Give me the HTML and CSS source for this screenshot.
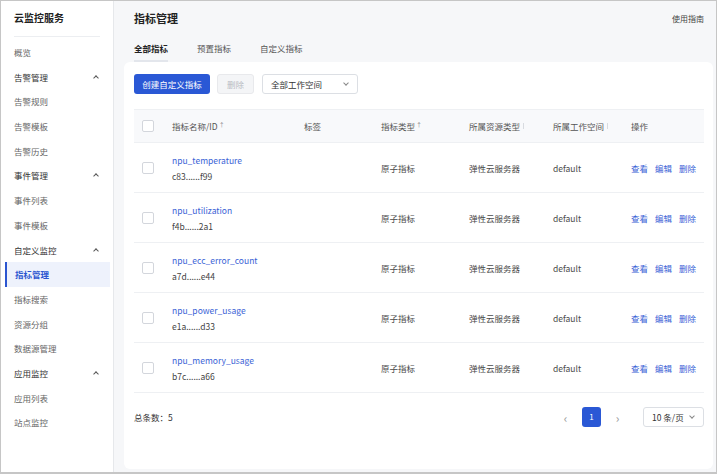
FILE: index.html
```html
<!DOCTYPE html>
<html lang="zh-CN">
<head>
  <meta charset="UTF-8" />
  <title>指标管理 - 云监控服务</title>
  <link rel="stylesheet" href="styles.css">
</head>
<body>
  <div class="frame">
    <nav class="sidebar">
      <h2>云监控服务</h2>
      <a class="nav-item">概览</a>
      <a class="nav-item group">告警管理<span class="caret"></span></a>
      <a class="nav-item">告警规则</a>
      <a class="nav-item">告警模板</a>
      <a class="nav-item">告警历史</a>
      <a class="nav-item group">事件管理<span class="caret"></span></a>
      <a class="nav-item">事件列表</a>
      <a class="nav-item">事件模板</a>
      <a class="nav-item group">自定义监控<span class="caret"></span></a>
      <a class="nav-item active">指标管理</a>
      <a class="nav-item">指标搜索</a>
      <a class="nav-item">资源分组</a>
      <a class="nav-item">数据源管理</a>
      <a class="nav-item group">应用监控<span class="caret"></span></a>
      <a class="nav-item">应用列表</a>
      <a class="nav-item">站点监控</a>
    </nav>

    <div class="main">
      <div class="page-head">
        <h1>指标管理</h1>
        <a class="guide">使用指南</a>
      </div>
      <div class="tabs">
        <span class="tab active">全部指标</span>
        <span class="tab">预置指标</span>
        <span class="tab">自定义指标</span>
      </div>

      <div class="card">
        <div class="toolbar">
          <button class="btn primary">创建自定义指标</button>
          <button class="btn disabled">删除</button>
          <div class="select ws">全部工作空间<span class="chev"></span></div>
        </div>

        <div class="table">
          <div class="row head">
            <span><i class="check"></i></span>
            <span>指标名称/ID<em class="sort">↑</em></span>
            <span>标签</span>
            <span>指标类型<em class="sort">↑</em></span>
            <span>所属资源类型<em class="bar"></em></span>
            <span>所属工作空间<em class="bar"></em></span>
            <span>操作</span>
          </div>
          <div id="rows"></div>
        </div>

        <div class="footer">
          <span class="total">总条数：5</span>
          <div class="pager">
            <span class="arrow">‹</span>
            <span class="page current">1</span>
            <span class="arrow">›</span>
            <div class="select size">10 条/页<span class="chev"></span></div>
          </div>
        </div>
      </div>
    </div>
  </div>

  <script>
    const metrics = [
      ["npu_temperature", "c83......f99"],
      ["npu_utilization", "f4b......2a1"],
      ["npu_ecc_error_count", "a7d......e44"],
      ["npu_power_usage", "e1a......d33"],
      ["npu_memory_usage", "b7c......a66"]
    ];

    const rows = document.getElementById("rows");
    metrics.forEach(([name, id]) => {
      const row = document.createElement("div");
      row.className = "row";
      row.innerHTML = `
        <span><i class="check"></i></span>
        <span class="name"><a>${name}</a><small>${id}</small></span>
        <span></span>
        <span>原子指标</span>
        <span>弹性云服务器</span>
        <span>default</span>
        <span class="ops"><a>查看</a><a>编辑</a><a>删除</a></span>`;
      rows.appendChild(row);
    });
  </script>
</body>
</html>
```

FILE: styles.css
```css
body {
  margin: 0;
  font-family: "Noto Sans CJK SC", "Noto Sans", sans-serif;
  color: #333;
  background: #fff;
}

.frame {
  width: 717px;
  height: 474px;
  box-sizing: border-box;
  border: 1px solid #c6c6c6;
  border-bottom-width: 2px;
  display: flex;
  overflow: hidden;
}

.sidebar {
  width: 113px;
  flex-shrink: 0;
  background: #fff;
  border-right: 1px solid #e6e8eb;
  padding: 0 3px 0 4px;
  box-sizing: border-box;
  display: flex;
  flex-direction: column;
}

.sidebar h2 {
  font-size: 10px;
  font-weight: 600;
  color: #222;
  margin: 0 10px 0 9px;
  height: 35px;
  line-height: 33px;
  border-bottom: 1px solid #eceef1;
  margin-bottom: 3px;
}

.nav-item {
  height: 24.7px;
  line-height: 24.7px;
  font-size: 8.5px;
  color: #666;
  padding-left: 9px;
  display: flex;
  align-items: center;
  position: relative;
}

.nav-item.group {
  color: #333;
}

.caret {
  position: absolute;
  left: 89px;
  top: 11px;
  width: 3px;
  height: 3px;
  border-left: 1px solid #555;
  border-top: 1px solid #555;
  transform: rotate(45deg);
}

.nav-item.active {
  background: #eef2fc;
  color: #2b55d0;
  font-weight: 600;
  border-left: 2px solid #2b55d0;
  padding-left: 8px;
}

.main {
  flex: 1;
  background: #f6f7f9;
  padding: 0 3px 3px 10px;
  display: flex;
  flex-direction: column;
}

.page-head {
  display: flex;
  justify-content: space-between;
  align-items: center;
  height: 34px;
  padding: 0 9px 0 10px;
}

.page-head h1 {
  font-size: 11px;
  font-weight: 600;
  color: #222;
  margin: 0;
}

.guide {
  font-size: 8px;
  color: #444;
}

.tabs {
  display: flex;
  gap: 29px;
  padding-left: 10px;
  height: 27px;
}

.tab {
  font-size: 8.5px;
  color: #555;
  line-height: 27px;
}

.tab.active {
  color: #222;
  font-weight: 600;
  border-bottom: 2px solid #e3e6ec;
}

.card {
  flex: 1;
  background: #fff;
  border-radius: 6px;
  padding: 12px 9px 0 10px;
  display: flex;
  flex-direction: column;
}

.toolbar {
  display: flex;
  gap: 7px;
  height: 20px;
}

.btn {
  font-family: inherit;
  font-size: 8.5px;
  border-radius: 3px;
  border: 1px solid transparent;
  padding: 0;
  height: 20px;
}

.btn.primary {
  width: 76px;
  background: #2a58d5;
  color: #fff;
}

.btn.disabled {
  width: 37px;
  background: #f4f5f7;
  border-color: #e8e9ec;
  color: #b9bcc2;
}

.select {
  position: relative;
  box-sizing: border-box;
  border: 1px solid #dcdfe4;
  border-radius: 3px;
  font-size: 8.5px;
  color: #333;
  display: flex;
  align-items: center;
  padding-left: 8px;
  background: #fff;
}

.select.ws {
  width: 96px;
  margin-left: 1px;
}

.chev {
  position: absolute;
  right: 9px;
  top: 6px;
  width: 3px;
  height: 3px;
  border-right: 1px solid #888;
  border-bottom: 1px solid #888;
  transform: rotate(45deg);
}

.table {
  margin-top: 15px;
}

.row {
  display: grid;
  grid-template-columns: 38px 132px 77px 88px 84px 78px 1fr;
  align-items: center;
  height: 50px;
  border-bottom: 1px solid #eef0f3;
  box-sizing: border-box;
  font-size: 8.5px;
  color: #4a4a4a;
}

.row.head {
  height: 34px;
  background: #f8f9fb;
  border-top: 1px solid #eef0f3;
  color: #555;
}

.row > span {
  display: flex;
  align-items: center;
}

.check {
  display: block;
  width: 10px;
  height: 10px;
  border: 1px solid #d3d6dc;
  border-radius: 2px;
  margin-left: 8px;
  background: #fff;
}

.sort {
  font-style: normal;
  font-size: 6px;
  color: #888;
  margin-left: 1px;
  margin-top: -4px;
}

.bar {
  display: block;
  width: 1px;
  height: 6px;
  background: #d8dbe0;
  margin-left: 3px;
}

.name {
  flex-direction: column;
  align-items: flex-start !important;
  gap: 4px;
}

.name a {
  color: #3a62d6;
}

.name small {
  font-size: 8.5px;
  color: #444;
}

.ops {
  gap: 7px;
}

.ops a {
  color: #3a62d6;
}

.footer {
  display: flex;
  justify-content: space-between;
  align-items: center;
  margin-top: 14px;
  height: 20px;
}

.total {
  font-size: 8.5px;
  color: #333;
}

.pager {
  display: flex;
  align-items: center;
}

.arrow {
  color: #999;
  font-size: 12px;
  width: 17px;
  text-align: center;
}

.page {
  width: 19px;
  height: 20px;
  line-height: 20px;
  text-align: center;
  font-size: 8px;
  border-radius: 3px;
  margin: 0 8px;
}

.page.current {
  background: #2a58d5;
  color: #fff;
}

.select.size {
  width: 61px;
  height: 20px;
  margin-left: 17px;
}
```
